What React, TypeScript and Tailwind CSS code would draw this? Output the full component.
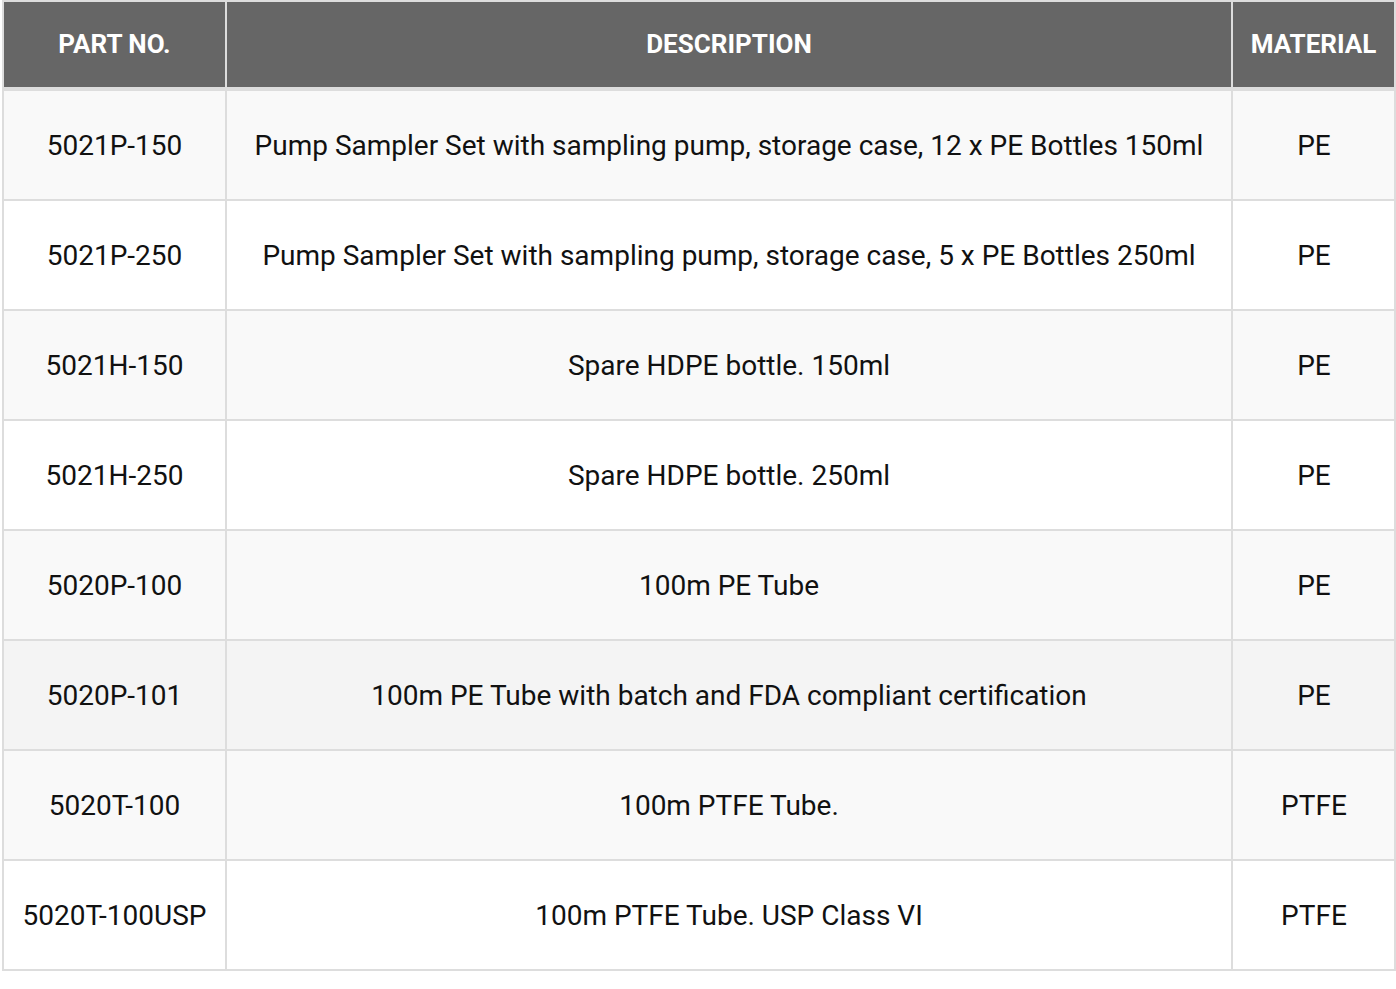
const rows = [
  { part: '5021P-150', desc: 'Pump Sampler Set with sampling pump, storage case, 12 x PE Bottles 150ml', mat: 'PE', bg: 'bg-[#f9f9f9]' },
  { part: '5021P-250', desc: 'Pump Sampler Set with sampling pump, storage case, 5 x PE Bottles 250ml', mat: 'PE', bg: 'bg-white' },
  { part: '5021H-150', desc: 'Spare HDPE bottle. 150ml', mat: 'PE', bg: 'bg-[#f9f9f9]' },
  { part: '5021H-250', desc: 'Spare HDPE bottle. 250ml', mat: 'PE', bg: 'bg-white' },
  { part: '5020P-100', desc: '100m PE Tube', mat: 'PE', bg: 'bg-[#f9f9f9]' },
  { part: '5020P-101', desc: '100m PE Tube with batch and FDA compliant certification', mat: 'PE', bg: 'bg-[#f4f4f4]' },
  { part: '5020T-100', desc: '100m PTFE Tube.', mat: 'PTFE', bg: 'bg-[#f9f9f9]' },
  { part: '5020T-100USP', desc: '100m PTFE Tube. USP Class VI', mat: 'PTFE', bg: 'bg-white' },
]

export default function App() {
  return (
    <div className="min-h-screen bg-white font-['Roboto',sans-serif]">
      <div className="ml-[2px] flex w-[1394px] flex-col gap-[2px] bg-[#dddddd] p-[2px]">
        <div className="mb-[2px] grid h-[85px] grid-cols-[221px_1004px_161px] gap-[2px] text-[26px] font-bold text-white">
          <div className="flex items-center justify-center bg-[#666666]">PART NO.</div>
          <div className="flex items-center justify-center bg-[#666666]">DESCRIPTION</div>
          <div className="flex items-center justify-center bg-[#666666]">MATERIAL</div>
        </div>
        {rows.map((r) => (
          <div key={r.part} className="grid h-[108px] grid-cols-[221px_1004px_161px] gap-[2px] text-[28px] text-[#111111]">
            <div className={`flex items-center justify-center pt-[2px] ${r.bg}`}>{r.part}</div>
            <div className={`flex items-center justify-center pt-[2px] ${r.bg}`}>{r.desc}</div>
            <div className={`flex items-center justify-center pt-[2px] pl-[1px] ${r.bg}`}>{r.mat}</div>
          </div>
        ))}
      </div>
    </div>
  )
}
